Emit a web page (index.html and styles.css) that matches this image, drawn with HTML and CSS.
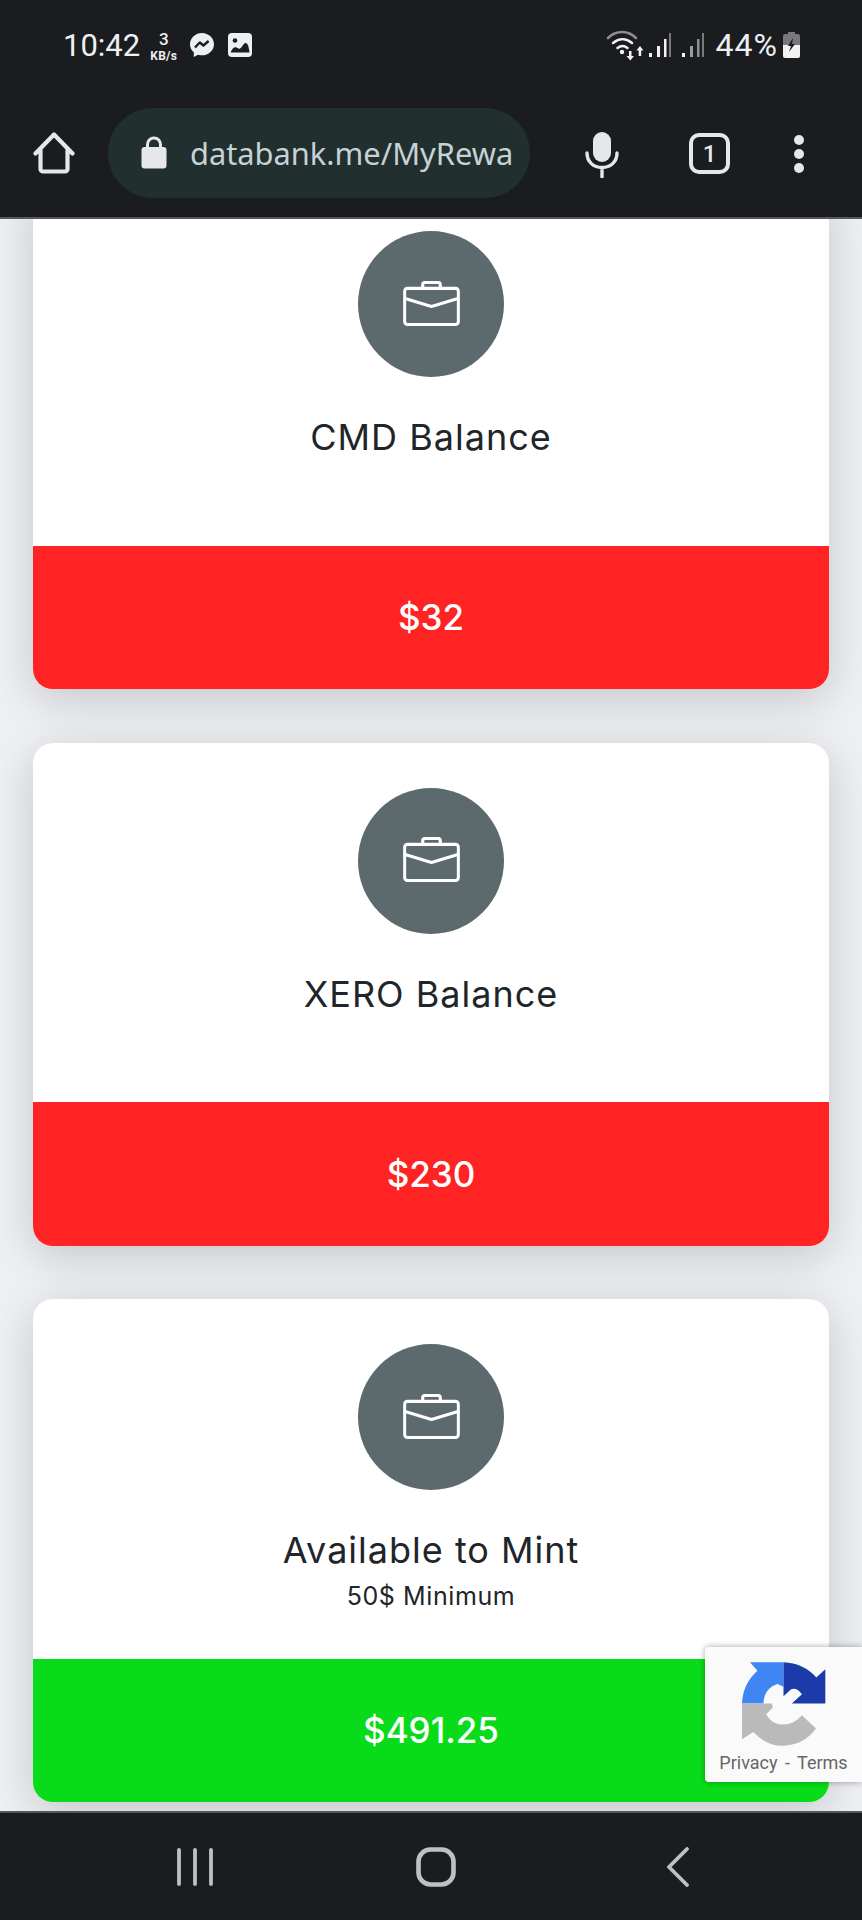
FILE: index.html
```html
<!DOCTYPE html>
<html lang="en">
<head>
    <meta charset="UTF-8">
    <meta name="viewport" content="width=device-width, initial-scale=1.0">
    <title>My Rewards</title>
    <link rel="stylesheet" href="styles.css">
</head>
<body>
    <div class="phone">
        <header class="chrome">
            <div class="status-bar">
                <div class="status-left">
                    <span class="clock">10:42</span>
                    <span class="speed"><b>3</b><i>KB/s</i></span>
                    <svg class="messenger" viewBox="0 0 26 26" width="26" height="26">
                        <path fill="#eeeff1" d="M13 1C6.4 1 1 5.9 1 12.2c0 3.3 1.4 6.1 3.8 8.1V25l4.2-2.3c1.3.4 2.6.6 4 .6 6.6 0 12-4.9 12-11.1S19.600 1 13 1z"/>
                        <path fill="none" stroke="#1a1c20" stroke-width="2.400" stroke-linejoin="round" d="M6 15.500l4.800-5 3.600 3 5.200-4.500"/>
                    </svg>
                    <svg class="gallery" viewBox="0 0 24 24" width="24" height="24">
                        <rect x="0" y="0" width="24" height="24" rx="4" fill="#eeeff1"/>
                        <circle cx="7" cy="7.500" r="2.300" fill="#1a1c20"/>
                        <path fill="#1a1c20" d="M2.500 19.500c2-4.500 4-6 6-5 1.500.8 2.300 1.500 3.500 1 2-.8 3.500-5.500 5.500-5.500 2.500 0 3.500 5 4 9.500z"/>
                    </svg>
                </div>
                <div class="status-right">
                    <svg class="wifi" viewBox="0 0 38 32" width="38" height="32">
                        <g fill="none" stroke-linecap="round" stroke-width="2.500">
                            <path stroke="#8d8f92" d="M2 9c8-8 20-8 28 0"/>
                            <path stroke="#f2f2f2" d="M7 14c6-5 13-5 19 0"/>
                            <path stroke="#f2f2f2" d="M11.500 19c3.500-2.800 6.500-2.800 10 0"/>
                        </g>
                        <circle cx="16" cy="23" r="2.200" fill="#f2f2f2"/>
                        <path fill="#f2f2f2" d="M23 22h2.500v5H28l-3.700 4.500L20.500 27H23zM34 17l3.500 4.500h-2.300V27h-2.500v-5.500h-2.300z"/>
                    </svg>
                    <svg class="bars" viewBox="0 0 22 26" width="22" height="26">
                        <rect x="0" y="21" width="3" height="4" fill="#f2f2f2"/>
                        <rect x="8" y="14" width="3" height="11" fill="#f2f2f2"/>
                        <rect x="15" y="7" width="2.500" height="18" fill="#f2f2f2"/>
                        <rect x="20" y="1" width="2" height="24" fill="#77797c"/>
                    </svg>
                    <svg class="bars" viewBox="0 0 22 26" width="22" height="26">
                        <rect x="0" y="21" width="3" height="4" fill="#f2f2f2"/>
                        <rect x="8" y="14" width="3" height="11" fill="#9a9b9e"/>
                        <rect x="15" y="7" width="2.500" height="18" fill="#8d8f92"/>
                        <rect x="20" y="1" width="2" height="24" fill="#77797c"/>
                    </svg>
                    <span class="battery-text">44%</span>
                    <svg class="battery" viewBox="0 0 17 26" width="17" height="26">
                        <path fill="#77797c" d="M5 0h7v2h3a2 2 0 0 1 2 2v9H0V4a2 2 0 0 1 2-2h3z"/>
                        <path fill="#f2f2f2" d="M0 13h17v11a2 2 0 0 1-2 2H2a2 2 0 0 1-2-2z"/>
                        <path fill="#1a1c20" d="M10 6L5 14h3l-2 6 6-8H9z"/>
                    </svg>
                </div>
            </div>
            <div class="toolbar">
                <svg class="home-icon" viewBox="0 0 42 42" width="42" height="42">
                    <path fill="none" stroke="#e6e7ea" stroke-width="4.200" stroke-linecap="round" stroke-linejoin="round" d="M2.500 21.500L21 2.500l18.500 19M7.500 16.500V37a2.500 2.500 0 0 0 2.500 2.500h22a2.500 2.500 0 0 0 2.500-2.500V16.500"/>
                </svg>
                <div class="url-pill">
                    <svg class="lock" viewBox="0 0 26 33" width="26" height="33">
                        <path fill="none" stroke="#e6e7ea" stroke-width="3" d="M6.500 12V8.500a6.500 6.500 0 0 1 13 0V12"/>
                        <rect x="0.500" y="11" width="25" height="21.500" rx="3" fill="#e6e7ea"/>
                    </svg>
                    <span class="url-text">databank.me/MyRewa</span>
                </div>
                <svg class="mic" viewBox="0 0 34 46" width="34" height="46">
                    <rect x="8" y="0" width="18" height="30" rx="9" fill="#e6e7ea"/>
                    <path fill="none" stroke="#e6e7ea" stroke-width="3.400" stroke-linecap="round" d="M2 21c0 9 6.500 14.500 15 14.500S32 30 32 21M17 36v9"/>
                </svg>
                <div class="tab-count">1</div>
                <div class="menu-dots"><span></span><span></span><span></span></div>
            </div>
        </header>

        <main class="content">
            <section class="card">
                <div class="card-body">
                    <div class="icon-circle">
                        <svg class="case" viewBox="0 0 58 46" width="57" height="45"><use href="#briefcase"/></svg>
                    </div>
                    <h2 class="card-title">CMD Balance</h2>
                </div>
                <div class="card-footer red">$32</div>
            </section>
            <section class="card">
                <div class="card-body">
                    <div class="icon-circle">
                        <svg class="case" viewBox="0 0 58 46" width="57" height="45"><use href="#briefcase"/></svg>
                    </div>
                    <h2 class="card-title">XERO Balance</h2>
                </div>
                <div class="card-footer red">$230</div>
            </section>
            <section class="card">
                <div class="card-body">
                    <div class="icon-circle">
                        <svg class="case" viewBox="0 0 58 46" width="57" height="45"><use href="#briefcase"/></svg>
                    </div>
                    <h2 class="card-title">Available to Mint</h2>
                    <p class="card-note">50$ Minimum</p>
                </div>
                <div class="card-footer green">$491.25</div>
            </section>

            <div class="recaptcha">
                <svg class="recaptcha-logo" viewBox="240 120 260 260" width="87" height="87">
                    <path fill="#3f86f3" d="M270 127H370V200L352 192Q312 205 310 250H246Q248 192 292 152Z"/>
                    <path fill="#1c3aa9" d="M370 127Q430 130 468 172L495 148V250H395L425 222Q408 200 392 208L370 228Z"/>
                    <path fill="#bababa" d="M246 250H335L338 262L318 282Q335 312 365 313Q400 315 425 285L467 325Q430 375 370 376Q320 378 280 335L246 357Z"/>
                </svg>
                <div class="recaptcha-links">Privacy - Terms</div>
            </div>
        </main>

        <nav class="nav-bar">
            <svg class="nav-recent" viewBox="0 0 36 38" width="36" height="38">
                <g fill="none" stroke="#bfc0c3" stroke-width="3.800" stroke-linecap="round"><path d="M2 2v34M18 2v34M34 2v34"/></g>
            </svg>
            <svg class="nav-home" viewBox="0 0 40 40" width="40" height="40">
                <rect x="2.500" y="2.500" width="35" height="35" rx="12" fill="none" stroke="#bfc0c3" stroke-width="4.600"/>
            </svg>
            <svg class="nav-back" viewBox="0 0 24 40" width="24" height="40">
                <path fill="none" stroke="#bfc0c3" stroke-width="3.800" stroke-linecap="round" stroke-linejoin="round" d="M21 2L3 20l18 18"/>
            </svg>
        </nav>
    </div>

    <svg class="sprite" width="0" height="0">
        <symbol id="briefcase" viewBox="0 0 58 46">
            <g fill="none" stroke="#fff" stroke-width="3.200" stroke-linejoin="round" stroke-linecap="round">
                <rect x="1.500" y="7.500" width="55" height="37" rx="3"/>
                <path d="M2 18l27 8 27-8"/>
                <path d="M20 7.500V4a2.500 2.500 0 0 1 2.500-2.500h13A2.500 2.500 0 0 1 38 4v3.500"/>
            </g>
        </symbol>
    </svg>
</body>
</html>
```

FILE: styles.css
```css
* {
    box-sizing: border-box;
}
body {
    margin: 0;
    background: #1a1c20;
    font-family: 'Inter', 'Liberation Sans', sans-serif;
}
.sprite {
    display: none;
}
.phone {
    width: 862px;
    height: 1920px;
    display: flex;
    flex-direction: column;
    overflow: hidden;
}

/* browser chrome */
.chrome {
    height: 219px;
    flex: none;
    background: #1a1c20;
    border-bottom: 2px solid #55575a;
}
.status-bar {
    height: 90px;
    padding: 0 62px 0 63px;
    display: flex;
    justify-content: space-between;
    align-items: center;
}
.status-left,
.status-right {
    display: flex;
    align-items: center;
}
.clock {
    font-family: 'Roboto', sans-serif;
    font-size: 31px;
    color: #eeeff1;
    margin-right: 10px;
}
.speed {
    display: flex;
    flex-direction: column;
    align-items: center;
    color: #eeeff1;
    font-family: 'Roboto', sans-serif;
    margin-right: 12px;
    margin-top: 2px;
}
.speed b {
    font-size: 17px;
    line-height: 20px;
    font-weight: 500;
}
.speed i {
    font-style: normal;
    font-weight: 700;
    font-size: 12px;
    letter-spacing: 0.3px;
    line-height: 14px;
}
.messenger {
    margin-right: 13px;
}
.status-right .wifi {
    margin-right: 5px;
}
.status-right .bars {
    margin-right: 11px;
}
.status-right .bars + .bars {
    margin-right: 12px;
}
.battery-text {
    font-family: 'Roboto', sans-serif;
    font-size: 32px;
    letter-spacing: 1px;
    color: #eeeff1;
    margin-right: 5px;
}
.toolbar {
    height: 127px;
    display: flex;
    align-items: flex-start;
    padding: 18px 0 0 33px;
}
.home-icon {
    margin: 24px 33px 0 0;
}
.url-pill {
    width: 422px;
    height: 90px;
    background: #21302f;
    border-radius: 45px;
    display: flex;
    align-items: center;
    padding-left: 33px;
    overflow: hidden;
}
.lock {
    flex: none;
    margin: -2px 23px 0 0;
}
.url-text {
    font-family: 'Noto Sans', sans-serif;
    font-size: 30.8px;
    color: #c6d2d6;
    white-space: nowrap;
}
.mic {
    margin: 24px 0 0 55px;
}
.tab-count {
    width: 41px;
    height: 41px;
    margin: 25px 0 0 70px;
    border: 4px solid #e6e7ea;
    border-radius: 10px;
    color: #e6e7ea;
    font-family: 'Roboto', sans-serif;
    font-size: 24px;
    font-weight: 500;
    display: flex;
    align-items: center;
    justify-content: center;
}
.menu-dots {
    margin: 27px 0 0 64px;
    display: flex;
    flex-direction: column;
    gap: 4px;
}
.menu-dots span {
    width: 10px;
    height: 10px;
    border-radius: 50%;
    background: #e6e7ea;
}

/* page */
.content {
    position: relative;
    flex: 1;
    overflow: hidden;
    background: #eef0f4;
    padding: 0 33px;
    display: flex;
    flex-direction: column;
    gap: 53.5px;
}
.card {
    flex: none;
    height: 503px;
    background: #fff;
    border-radius: 20px;
    box-shadow: 0 10px 46px rgba(0, 0, 0, 0.18);
    display: flex;
    flex-direction: column;
    overflow: hidden;
}
.card:first-child {
    margin-top: -33px;
}
.card-body {
    height: 359.500px;
    padding-top: 45px;
    display: flex;
    flex-direction: column;
    align-items: center;
    color: #212529;
}
.icon-circle {
    width: 146px;
    height: 146px;
    border-radius: 50%;
    background: #5c6a6e;
    display: flex;
    align-items: center;
    justify-content: center;
    margin-bottom: 37px;
}
.case {
    margin-top: -2px;
}
.card-title {
    margin: 0;
    font-size: 36px;
    letter-spacing: 1px;
    line-height: 46px;
    font-weight: 400;
}
.card-note {
    margin: 8px 0 0;
    font-size: 25px;
    letter-spacing: 0.6px;
    line-height: 30px;
}
.card-footer {
    flex: 1;
    display: flex;
    align-items: center;
    justify-content: center;
    color: #fff;
    font-size: 35px;
    font-weight: 500;
}
.red {
    background: #ff2323;
}
.green {
    background: #08dc1a;
}

/* recaptcha badge */
.recaptcha {
    position: absolute;
    top: 1428px;
    right: 0;
    width: 157px;
    height: 135px;
    background: #fafafa;
    border-radius: 4px 0 0 4px;
    box-shadow: 0 0 6px rgba(0, 0, 0, 0.35);
    display: flex;
    flex-direction: column;
    align-items: center;
    padding-top: 13px;
}
.recaptcha-links {
    font-family: 'Roboto', sans-serif;
    font-size: 18px;
    word-spacing: 3px;
    color: #666;
    white-space: nowrap;
    margin-top: 5px;
}

/* android navigation */
.nav-bar {
    height: 109px;
    flex: none;
    background: #1a1c20;
    border-top: 2px solid #55575a;
    display: flex;
    align-items: center;
    padding-left: 177px;
}
.nav-recent {
    margin-right: 203px;
}
.nav-home {
    margin-right: 210px;
}
```
